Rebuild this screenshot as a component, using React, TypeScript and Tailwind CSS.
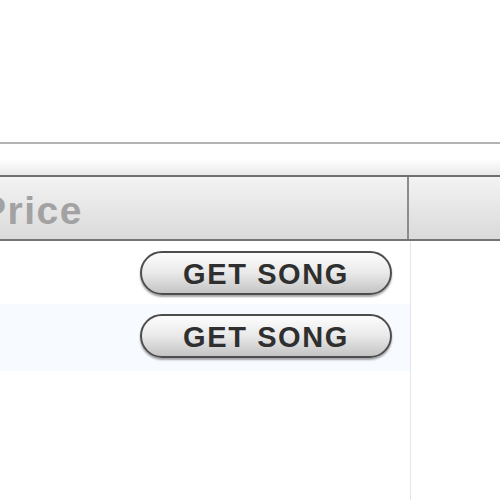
export default function App() {
  const font = { fontFamily: '"Liberation Sans", Arial, sans-serif' };
  return (
    <div className="w-[500px] h-[500px] overflow-hidden bg-white" style={font}>
      <div className="h-[142px]" />
      <div className="h-[2px] bg-[#b3b3b3]" />
      <div className="h-[31px] bg-gradient-to-b from-white via-white to-[#e9e9e9]" />

      {/* header */}
      <div className="flex h-[66px] border-y-2 border-t-[#6f6f6f] border-b-[#747474] bg-gradient-to-b from-[#f3f3f3] to-[#dadada]">
        <div className="w-[409px] border-r-2 border-r-[#8c8c8c] flex items-center overflow-hidden">
          <span className="shrink-0 -ml-[20px] mt-[4px] text-[39px] font-bold text-[#a2a2a2] tracking-[1.5px] leading-none">Price</span>
        </div>
        <div className="flex-1" />
      </div>

      {/* rows */}
      <div className="flex">
        <div className="w-[410px] flex flex-col">
          <SongRow tint={false} />
          <SongRow tint={true} />
          <div className="h-[200px]" />
        </div>
        <div className="flex-1 border-l border-l-[#e3e5ee]" />
      </div>
    </div>
  );
}

function SongRow({ tint }: { tint: boolean }) {
  return (
    <div className={`h-[63px] pt-[10px] pl-[140px] ${tint ? "bg-[#f7faff] h-[67px]" : "bg-white"}`}>
      <button className="w-[252px] h-[44px] rounded-full border-2 border-[#4d4d4d] bg-gradient-to-b from-[#fdfdfd] via-[#e9e9e9] to-[#c4c4c4] shadow-[0_2px_2px_rgba(0,0,0,0.35)] flex items-center justify-center">
        <span className="text-[29px] font-bold text-[#2f2f2f] tracking-[1.6px] leading-none mt-[2px]">GET SONG</span>
      </button>
    </div>
  );
}
